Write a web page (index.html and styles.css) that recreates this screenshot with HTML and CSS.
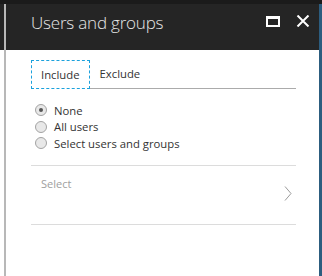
FILE: index.html
```html
<!DOCTYPE html>
<html lang="en">
<head>
    <meta charset="UTF-8">
    <title>Users and groups</title>
    <link rel="stylesheet" href="styles.css">
</head>
<body>

<div class="topbar"></div>

<div class="blade">
    <div class="header">
        <h2 class="title">Users and groups</h2>
        <div class="actions">
            <span class="btnMax"></span>
            <svg class="btnClose" width="14" height="12" viewBox="0 0 14 12">
                <path d="M1.5 0.5 L12.5 11.5 M12.5 0.5 L1.5 11.5" stroke="#fff" stroke-width="2" fill="none"/>
            </svg>
        </div>
    </div>

    <div class="content">
        <div class="tabs">
            <div class="tab ativo">Include</div>
            <div class="tab">Exclude</div>
        </div>

        <div class="opcoes">
            <div class="opcao"><span class="radio marcado"></span>None</div>
            <div class="opcao"><span class="radio"></span>All users</div>
            <div class="opcao"><span class="radio"></span>Select users and groups</div>
        </div>

        <div class="seletor">
            <span class="placeholder">Select</span>
            <svg class="chevron" width="8" height="15" viewBox="0 0 8 15">
                <path d="M1 0.5 L7 7.5 L1 14.5" stroke="#9a9a9a" stroke-width="1" fill="none"/>
            </svg>
        </div>
    </div>
</div>

</body>
</html>
```

FILE: styles.css
```css
body {
    margin: 0;
    font-family: "Open Sans", "Noto Sans", sans-serif;
    background: #fff;
    width: 322px;
    height: 276px;
    overflow: hidden;
}
.topbar {
    height: 4px;
    background: #1b1b1b;
}
.blade {
    position: relative;
    height: 272px;
    border-right: 3px solid #2c5d7f;
    display: flex;
    flex-direction: column;
}
.blade::before {
    content: "";
    position: absolute;
    left: 4px;
    top: 0;
    bottom: 0;
    width: 2px;
    background: #b8b8b8;
}
.header {
    height: 46px;
    box-sizing: border-box;
    background: #252525;
    display: flex;
    align-items: flex-start;
    justify-content: space-between;
    padding: 7px 9px 0 31px;
}
.title {
    margin: 0;
    font-size: 17px;
    line-height: 24px;
    font-weight: 300;
    color: #e6e6e6;
    letter-spacing: -0.2px;
}
.actions {
    display: flex;
    align-items: center;
    gap: 16px;
    padding-top: 4px;
}
.btnMax {
    width: 10px;
    height: 6px;
    border: 2px solid #fff;
    border-top-width: 3px;
}
.content {
    flex: 1;
    background: #fff;
    padding: 10px 23px 0 31px;
}
.tabs {
    display: flex;
    border-bottom: 1px solid #ababab;
    height: 28px;
}
.tab {
    font-size: 11.3px;
    color: #333;
    padding: 0 10px;
    line-height: 28px;
}
.tab.ativo {
    border: 1px dashed #1ba1dc;
    padding: 0 9px;
    line-height: 27px;
    height: 27px;
    background: #fff;
}
.opcoes {
    padding-top: 13px;
    padding-bottom: 13px;
}
.opcao {
    display: flex;
    align-items: center;
    height: 16.5px;
    font-size: 11.3px;
    color: #333;
    padding-left: 4px;
}
.radio {
    width: 10px;
    height: 10px;
    border: 1px solid #a3a3a3;
    border-radius: 50%;
    background: #e8e8e8;
    margin-right: 7px;
    display: flex;
    align-items: center;
    justify-content: center;
}
.radio.marcado::after {
    content: "";
    width: 4px;
    height: 4px;
    border-radius: 50%;
    background: #555;
}
.seletor {
    height: 60px;
    border-top: 1px solid #dcdcdc;
    border-bottom: 1px solid #dcdcdc;
    display: flex;
    justify-content: space-between;
    padding: 10px 4px 0 10px;
    box-sizing: border-box;
}
.placeholder {
    font-size: 11px;
    color: #a0a0a0;
}
.chevron {
    margin-top: 10px;
}
```
